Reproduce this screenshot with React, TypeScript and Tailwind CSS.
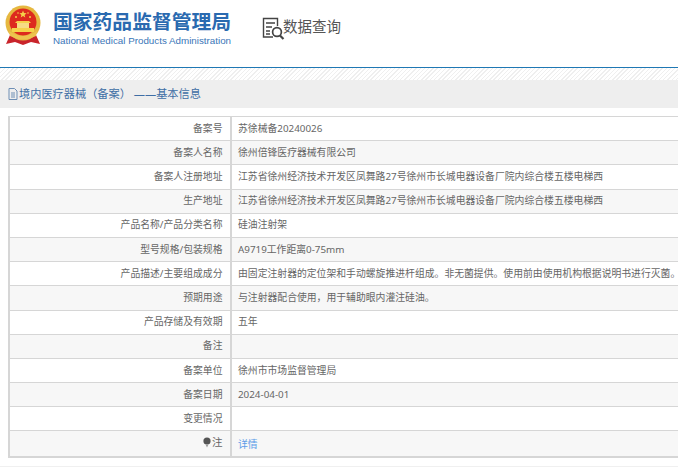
import React from 'react'

const rows = [
  { label: '备案号', value: '苏徐械备20240026' },
  { label: '备案人名称', value: '徐州倍锋医疗器械有限公司' },
  { label: '备案人注册地址', value: '江苏省徐州经济技术开发区凤舞路27号徐州市长城电器设备厂院内综合楼五楼电梯西' },
  { label: '生产地址', value: '江苏省徐州经济技术开发区凤舞路27号徐州市长城电器设备厂院内综合楼五楼电梯西' },
  { label: '产品名称/产品分类名称', value: '硅油注射架' },
  { label: '型号规格/包装规格', value: 'A9719工作距离0-75mm' },
  { label: '产品描述/主要组成成分', value: '由固定注射器的定位架和手动螺旋推进杆组成。非无菌提供。使用前由使用机构根据说明书进行灭菌。' },
  { label: '预期用途', value: '与注射器配合使用，用于辅助眼内灌注硅油。' },
  { label: '产品存储及有效期', value: '五年' },
  { label: '备注', value: '' },
  { label: '备案单位', value: '徐州市市场监督管理局' },
  { label: '备案日期', value: '2024-04-01' },
  { label: '变更情况', value: '' },
]

const Emblem = () => (
  <svg width="36" height="41" viewBox="0 0 36 41" className="shrink-0">
    <path d="M5 30 L1 39 L10 37 L18 40 L26 37 L35 39 L31 30 Z" fill="#c9242b" />
    <circle cx="18" cy="18" r="17.5" fill="#e6b840" />
    <circle cx="18" cy="17" r="13.5" fill="#dd2a1e" />
    <path d="M15 5.5l1 2.6 2.6.1-2 1.7.7 2.6-2.3-1.5-2.3 1.5.7-2.6-2-1.7 2.6-.1z" transform="translate(3 0)" fill="#f5d24a" />
    <circle cx="11" cy="12" r="1" fill="#f5d24a" />
    <circle cx="25" cy="12" r="1" fill="#f5d24a" />
    <circle cx="13" cy="8" r="0.8" fill="#f5d24a" />
    <circle cx="23" cy="8" r="0.8" fill="#f5d24a" />
    <path d="M12 16h12l2 2H10z" fill="#f5d24a" />
    <rect x="12" y="18" width="12" height="5" fill="#f6dc84" />
    <rect x="7" y="23" width="22" height="4" fill="#f5d24a" />
    <path d="M4 26 Q18 36 32 26 L31 31 Q18 38 5 31 Z" fill="#edc34f" />
  </svg>
)

const SearchDoc = () => (
  <svg width="24" height="24" viewBox="0 0 24 24" fill="none" stroke="#444" className="shrink-0">
    <path d="M12 20H2.5V1.5H16.5V9" strokeWidth="1.4" />
    <path d="M5 6h9M5 10h6M5 14h4M5 17h4" strokeWidth="1.3" />
    <circle cx="16" cy="15" r="4.4" strokeWidth="1.7" />
    <path d="M19 18.5l3.5 3.5" strokeWidth="2.2" />
  </svg>
)

const DocIcon = () => (
  <svg width="10" height="12" viewBox="0 0 10 12" fill="none" stroke="#6f8fb5" className="shrink-0">
    <path d="M1 .5h5.5L9 3v8.5H1z" />
    <path d="M3 5h4M3 7h4M3 9h4" />
  </svg>
)

const PinIcon = () => (
  <svg width="8" height="11" viewBox="0 0 8 11" className="shrink-0">
    <circle cx="4" cy="4" r="3.6" fill="#555" />
    <path d="M2.5 7.5h3L4 10.5z" fill="#999" />
  </svg>
)

export default function App() {
  return (
    <div className="h-[467px] w-[678px] overflow-hidden bg-white font-['Noto_Sans','Noto_Sans_CJK_SC',sans-serif] text-[9.84px] text-[#666] [text-spacing-trim:space-all]">
      <header className="flex h-[67px] items-start pl-[5px] pt-[5px]">
        <Emblem />
        <div className="ml-[12px] flex flex-col">
          <div className="mt-[5px] text-[19.8px] font-bold leading-[24px] text-[#2a6ab0] whitespace-nowrap">国家药品监督管理局</div>
          <div className="font-['Liberation_Sans',sans-serif] mt-[1px] text-[9.8px] leading-[12px] text-[#3a76b8] whitespace-nowrap">National Medical Products Administration</div>
        </div>
        <div className="ml-[30px] mt-[12px] flex items-start">
          <SearchDoc />
          <span className="ml-[-2px] mt-[-2px] text-[14.5px] leading-[22px] text-[#555]">数据查询</span>
        </div>
      </header>

      <div className="h-[13px] border-t border-[#1f78b4] bg-[repeating-linear-gradient(135deg,#efefef_0,#efefef_1px,#ffffff_1px,#ffffff_3px)]" />

      <div className="flex h-[28px] items-center bg-[#eeeeee] pl-[8px] text-[11.2px] text-[#3f6ea5]">
        <DocIcon />
        <span className="ml-[1px] whitespace-nowrap">境内医疗器械（备案） ——基本信息</span>
      </div>

      <div className="ml-[8px] mt-[8px] w-[700px] border-2 border-r-0 border-t-[1.5px] border-[#d6d6d6]">
        {rows.map((row, i) => (
          <div
            key={row.label}
            className={`grid h-[24.2px] grid-cols-[222px_1fr] border-b border-[#d6d6d6] ${i % 2 === 1 ? 'bg-[#f7f7f7]' : 'bg-white'}`}
          >
            <div className="flex items-center justify-end whitespace-nowrap border-r-2 border-[#d6d6d6] pr-[7.5px] leading-none">{row.label}</div>
            <div className="flex items-center whitespace-nowrap pl-[6px] leading-none">{row.value}</div>
          </div>
        ))}
        <div className="grid h-[24.2px] grid-cols-[222px_1fr] bg-[#f7f7f7]">
          <div className="flex items-center justify-end gap-[1px] border-r-2 border-[#d6d6d6] pb-[2px] pr-[7.5px] leading-none">
            <PinIcon />
            <span className="text-[10.5px]">注</span>
          </div>
          <div className="flex items-center pl-[6px] pt-[2px] leading-none text-[#5b9be8]">详情</div>
        </div>
      </div>

      <div className="mt-[8px] h-[4px] bg-[#f0f0f0]" />
    </div>
  )
}
